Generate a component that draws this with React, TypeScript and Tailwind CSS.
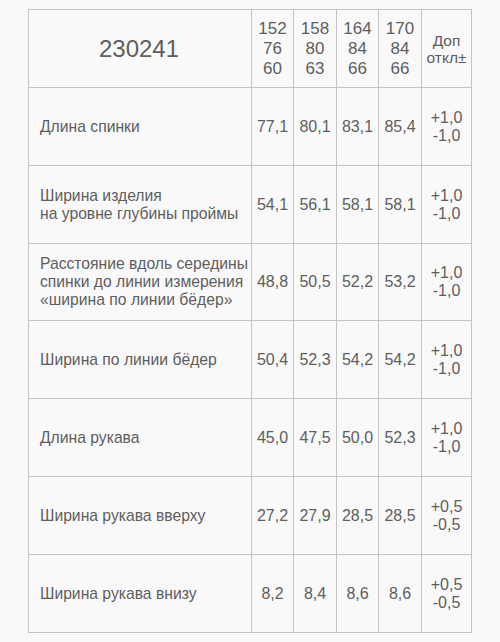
import React from "react";

const rows: { label: string[]; vals: string[]; tol: string[]; h: string }[] = [
  { label: ["Длина спинки"], vals: ["77,1", "80,1", "83,1", "85,4"], tol: ["+1,0", "-1,0"], h: "h-[77px]" },
  { label: ["Ширина изделия", "на уровне глубины проймы"], vals: ["54,1", "56,1", "58,1", "58,1"], tol: ["+1,0", "-1,0"], h: "h-[77px]" },
  { label: ["Расстояние вдоль середины", "спинки до линии измерения", "«ширина по линии бёдер»"], vals: ["48,8", "50,5", "52,2", "53,2"], tol: ["+1,0", "-1,0"], h: "h-[76px]" },
  { label: ["Ширина по линии бёдер"], vals: ["50,4", "52,3", "54,2", "54,2"], tol: ["+1,0", "-1,0"], h: "h-[77px]" },
  { label: ["Длина рукава"], vals: ["45,0", "47,5", "50,0", "52,3"], tol: ["+1,0", "-1,0"], h: "h-[77px]" },
  { label: ["Ширина рукава вверху"], vals: ["27,2", "27,9", "28,5", "28,5"], tol: ["+0,5", "-0,5"], h: "h-[77px]" },
  { label: ["Ширина рукава внизу"], vals: ["8,2", "8,4", "8,6", "8,6"], tol: ["+0,5", "-0,5"], h: "h-[77px]" },
];

const sizes = [
  ["152", "76", "60"],
  ["158", "80", "63"],
  ["164", "84", "66"],
  ["170", "84", "66"],
];

export default function App() {
  return (
    <div
      className="w-[500px] h-[642px] bg-[#f9f9f9] pt-[9px] pl-[28px] text-[#5e5e5e]"
      style={{ fontFamily: '"Liberation Sans", Arial, sans-serif' }}
    >
      <div className="w-[444px] bg-[#c4c4c4] p-px grid grid-cols-[222px_41px_42px_41px_42px_49px] gap-px">
        <div className="h-[77px] bg-[#f9f9f9] flex items-center justify-center text-[24px] pr-[2px]">230241</div>
        {sizes.map((s, i) => (
          <div key={i} className="h-[77px] bg-[#f9f9f9] flex flex-col items-center justify-center text-[17px] leading-[20px]">
            {s.map((t, j) => (
              <span key={j}>{t}</span>
            ))}
          </div>
        ))}
        <div className="h-[77px] bg-[#f9f9f9] flex flex-col items-center justify-center text-[15.5px] leading-[17px]">
          <span>Доп</span>
          <span>откл±</span>
        </div>
        {rows.map((r, i) => (
          <React.Fragment key={i}>
            <div className={`${r.h} bg-[#f9f9f9] flex flex-col justify-center pl-[11px] text-[15.7px] leading-[18px] whitespace-nowrap`}>
              {r.label.map((l, j) => (
                <span key={j}>{l}</span>
              ))}
            </div>
            {r.vals.map((v, j) => (
              <div key={j} className={`${r.h} bg-[#f9f9f9] flex items-center justify-center text-[16px]`}>
                {v}
              </div>
            ))}
            <div className={`${r.h} bg-[#f9f9f9] flex flex-col items-center justify-center text-[16px] leading-[18px]`}>
              {r.tol.map((t, j) => (
                <span key={j}>{t}</span>
              ))}
            </div>
          </React.Fragment>
        ))}
      </div>
    </div>
  );
}
